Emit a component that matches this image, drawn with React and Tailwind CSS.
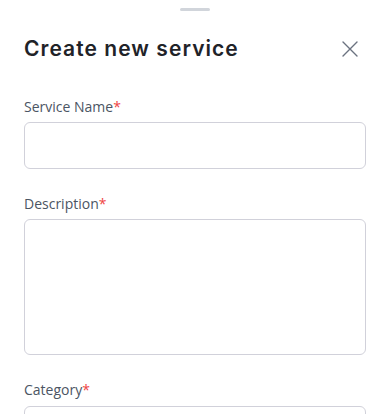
export default function App() {
  const label = "text-sm leading-5 text-[#4b5563]";
  const font = { fontFamily: '"Open Sans", "Noto Sans", sans-serif' };
  return (
    <div className="w-[390px] h-[414px] bg-white overflow-hidden" style={font}>
      <div className="flex justify-center pt-2">
        <div className="w-[30px] h-[3px] rounded-full bg-[#d1d5db]" />
      </div>
      <div className="flex items-center justify-between px-6 mt-[24px] h-7">
        <h2
          className="text-[21px] leading-7 font-semibold tracking-[1.05px] text-[#1f2328]"
          style={{ fontFamily: 'Inter, "Noto Sans", sans-serif' }}
        >
          Create new service
        </h2>
        <button className="w-4 h-4 mr-[8px] text-[#6b7280]" aria-label="Close">
          <svg viewBox="0 0 16 16" width="16" height="16" fill="none" stroke="currentColor" strokeWidth="1.4" strokeLinecap="round">
            <path d="M1 1L15 15M15 1L1 15" />
          </svg>
        </button>
      </div>
      <div className="px-6 mt-[34px] flex flex-col gap-[25px]">
        <div className="flex flex-col gap-[5px]">
          <label className={label}>
            Service Name<span className="text-[#ef4444]">*</span>
          </label>
          <input className="h-[47px] w-full rounded-md border border-[#d1d1da] outline-none px-3" />
        </div>
        <div className="flex flex-col gap-[5px]">
          <label className={label}>
            Description<span className="text-[#ef4444]">*</span>
          </label>
          <textarea className="h-[136px] w-full rounded-md border border-[#d1d1da] outline-none px-3 py-2 resize-none" />
        </div>
        <div className="flex flex-col gap-[6px]">
          <label className={label}>
            Category<span className="text-[#ef4444]">*</span>
          </label>
          <div className="h-[46px] w-full rounded-md border border-[#d1d1da]" />
        </div>
      </div>
    </div>
  );
}
